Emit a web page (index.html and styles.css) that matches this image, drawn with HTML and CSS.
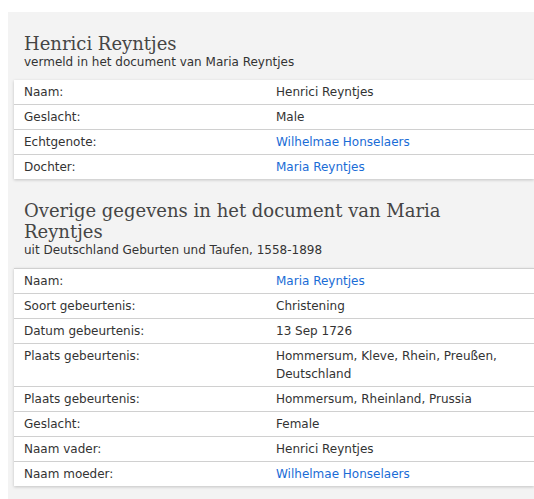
FILE: index.html
```html
<!DOCTYPE html>
<html lang="nl">
<head>
<meta charset="utf-8">
<title>Henrici Reyntjes</title>
<link rel="stylesheet" href="styles.css">
</head>
<body>
<div class="panel">
  <div class="header">
    <h2 class="title">Henrici Reyntjes</h2>
    <div class="subtitle">vermeld in het document van Maria Reyntjes</div>
  </div>
  <table class="facts">
    <colgroup><col class="label-col"><col></colgroup>
    <tr><td class="label">Naam:</td><td class="value">Henrici Reyntjes</td></tr>
    <tr><td class="label">Geslacht:</td><td class="value">Male</td></tr>
    <tr><td class="label">Echtgenote:</td><td class="value"><a href="#">Wilhelmae Honselaers</a></td></tr>
    <tr><td class="label">Dochter:</td><td class="value"><a href="#">Maria Reyntjes</a></td></tr>
  </table>
  <div class="header">
    <h2 class="title">Overige gegevens in het document van Maria Reyntjes</h2>
    <div class="subtitle">uit Deutschland Geburten und Taufen, 1558-1898</div>
  </div>
  <table class="facts bordered">
    <colgroup><col class="label-col"><col></colgroup>
    <tr><td class="label">Naam:</td><td class="value"><a href="#">Maria Reyntjes</a></td></tr>
    <tr><td class="label">Soort gebeurtenis:</td><td class="value">Christening</td></tr>
    <tr><td class="label">Datum gebeurtenis:</td><td class="value">13 Sep 1726</td></tr>
    <tr><td class="label">Plaats gebeurtenis:</td><td class="value">Hommersum, Kleve, Rhein, Preußen, Deutschland</td></tr>
    <tr><td class="label">Plaats gebeurtenis:</td><td class="value">Hommersum, Rheinland, Prussia</td></tr>
    <tr><td class="label">Geslacht:</td><td class="value">Female</td></tr>
    <tr><td class="label">Naam vader:</td><td class="value">Henrici Reyntjes</td></tr>
    <tr><td class="label">Naam moeder:</td><td class="value"><a href="#">Wilhelmae Honselaers</a></td></tr>
  </table>
  <div class="footer"></div>
</div>
</body>
</html>
```
FILE: styles.css
```css
html, body {
  margin: 0;
  padding: 0;
  background: #ffffff;
  overflow: hidden;
}
body {
  font-family: "DejaVu Sans", Verdana, sans-serif;
  font-size: 12px;
  color: #333333;
}
.panel {
  margin: 12px 0 0 8px;
  background: #f3f3f3;
  padding: 0 0 0 6px;
}
.header {
  padding: 21px 30px 10px 10px;
}
.title {
  margin: 0;
  font-family: "DejaVu Serif", serif;
  font-weight: normal;
  font-size: 18px;
  line-height: 21px;
  color: #454545;
}
.subtitle {
  margin-top: 1px;
  font-size: 12px;
  line-height: 15px;
  color: #333333;
}
.facts {
  width: 100%;
  table-layout: fixed;
  border-collapse: collapse;
  background: #ffffff;
  box-shadow: 0 1px 3px rgba(0, 0, 0, 0.2);
}
.label-col {
  width: 252px;
}
.facts td {
  padding: 3px 10px;
  line-height: 18px;
  vertical-align: top;
  border-bottom: 1px solid #d0d0d0;
}
.facts tr:last-child td {
  border-bottom: none;
}
.bordered {
  border-top: 1px solid #d0d0d0;
}
a {
  color: #1a6cd6;
  text-decoration: none;
}
.footer {
  height: 14px;
}
```
